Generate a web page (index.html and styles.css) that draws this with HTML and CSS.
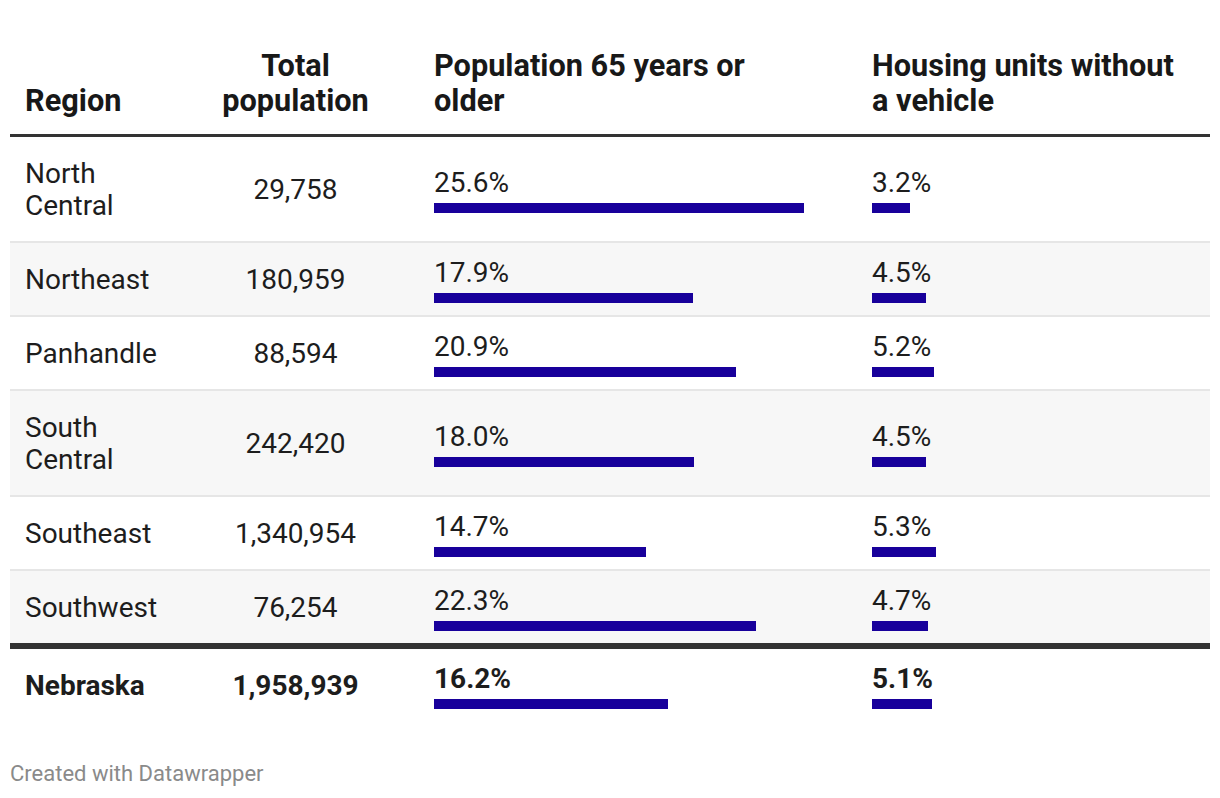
FILE: index.html
```html
<!DOCTYPE html>
<html lang="en">
<head>
<meta charset="utf-8">
<title>Nebraska regions</title>
<link rel="stylesheet" href="styles.css">
</head>
<body>
<div class="chart">
  <table class="dw-table">
    <colgroup>
      <col class="c-region">
      <col class="c-total">
      <col class="c-old">
      <col class="c-veh">
    </colgroup>
    <thead>
      <tr>
        <th class="left">Region</th>
        <th class="center">Total<br>population</th>
        <th class="left">Population 65 years or<br>older</th>
        <th class="left">Housing units without<br>a vehicle</th>
      </tr>
    </thead>
    <tbody>
      <tr>
        <td class="left two">North<br>Central</td>
        <td class="center">29,758</td>
        <td class="barcell"><div class="val">25.6%</div><div class="bar" style="width:370px"></div></td>
        <td class="barcell"><div class="val">3.2%</div><div class="bar" style="width:38px"></div></td>
      </tr>
      <tr class="alt">
        <td class="left">Northeast</td>
        <td class="center">180,959</td>
        <td class="barcell"><div class="val">17.9%</div><div class="bar" style="width:259px"></div></td>
        <td class="barcell"><div class="val">4.5%</div><div class="bar" style="width:54px"></div></td>
      </tr>
      <tr>
        <td class="left">Panhandle</td>
        <td class="center">88,594</td>
        <td class="barcell"><div class="val">20.9%</div><div class="bar" style="width:302px"></div></td>
        <td class="barcell"><div class="val">5.2%</div><div class="bar" style="width:62px"></div></td>
      </tr>
      <tr class="alt">
        <td class="left two">South<br>Central</td>
        <td class="center">242,420</td>
        <td class="barcell"><div class="val">18.0%</div><div class="bar" style="width:260px"></div></td>
        <td class="barcell"><div class="val">4.5%</div><div class="bar" style="width:54px"></div></td>
      </tr>
      <tr>
        <td class="left">Southeast</td>
        <td class="center">1,340,954</td>
        <td class="barcell"><div class="val">14.7%</div><div class="bar" style="width:212px"></div></td>
        <td class="barcell"><div class="val">5.3%</div><div class="bar" style="width:64px"></div></td>
      </tr>
      <tr class="alt">
        <td class="left">Southwest</td>
        <td class="center">76,254</td>
        <td class="barcell"><div class="val">22.3%</div><div class="bar" style="width:322px"></div></td>
        <td class="barcell"><div class="val">4.7%</div><div class="bar" style="width:56px"></div></td>
      </tr>
    </tbody>
    <tfoot>
      <tr class="total">
        <td class="left">Nebraska</td>
        <td class="center">1,958,939</td>
        <td class="barcell"><div class="val">16.2%</div><div class="bar" style="width:234px"></div></td>
        <td class="barcell"><div class="val">5.1%</div><div class="bar" style="width:60px"></div></td>
      </tr>
    </tfoot>
  </table>
  <div class="credit">Created with Datawrapper</div>
</div>
</body>
</html>
```

FILE: styles.css
```css
html, body {
  margin: 0;
  padding: 0;
  background: #ffffff;
}

body {
  font-family: Roboto, "Liberation Sans", Arial, sans-serif;
  color: #1d1d1d;
}

.chart {
  padding: 32px 10px 0 10px;
}

.dw-table {
  width: 1200px;
  table-layout: fixed;
  border-collapse: collapse;
  border-spacing: 0;
}

.c-region { width: 162px; }
.c-total { width: 247px; }
.c-old { width: 438px; }
.c-veh { width: 353px; }

.dw-table th {
  font-size: 30.7px;
  line-height: 35px;
  font-weight: 700;
  color: #181818;
  vertical-align: bottom;
  padding: 16px 15px 16px 15px;
  border-bottom: 3px solid #333333;
  white-space: nowrap;
}

.dw-table td {
  font-size: 28px;
  line-height: 31px;
  vertical-align: middle;
  padding: 21px 15px 20px 15px;
  border-bottom: 2px solid #e6e6e6;
  white-space: nowrap;
}

.dw-table td.two {
  line-height: 31.5px;
}

.dw-table tr.alt td {
  background: #f7f7f7;
}

.left { text-align: left; }
.center { text-align: center; }

.dw-table td.barcell {
  padding-top: 14px;
  padding-bottom: 12px;
}

.val {
  line-height: 31px;
}

.bar {
  height: 10px;
  margin-top: 5px;
  background: #18009b;
}

.dw-table tr.total td {
  font-weight: 700;
  border-top: 6px solid #333333;
  border-bottom: none;
  background: #ffffff;
}

.credit {
  margin-top: 40px;
  font-size: 22px;
  line-height: 26px;
  color: #8a8a8a;
}
```
